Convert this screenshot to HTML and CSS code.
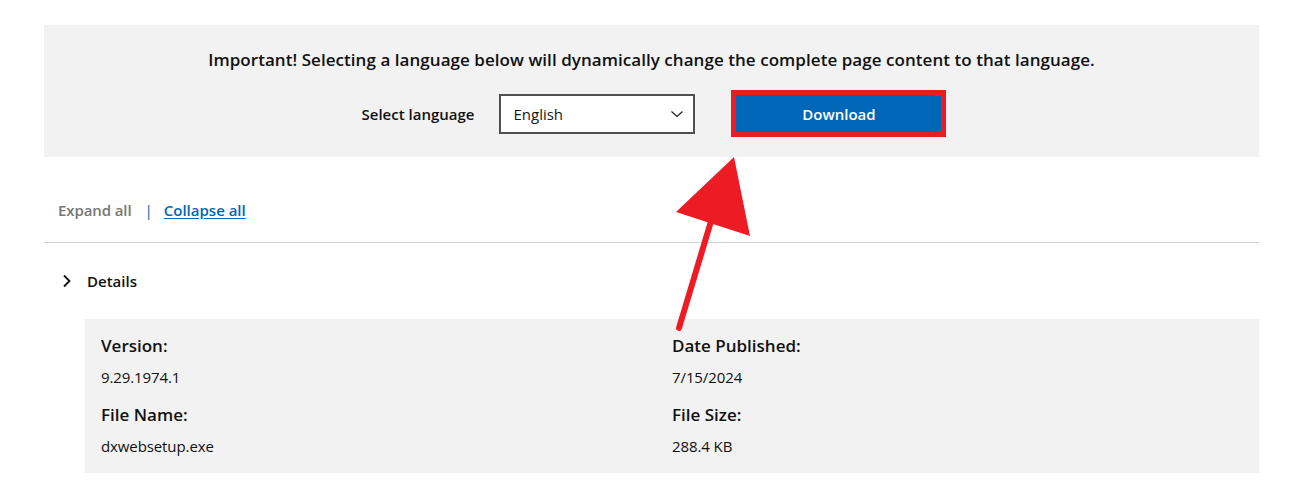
FILE: index.html
```html
<!DOCTYPE html>
<html lang="en">
<head>
<meta charset="utf-8">
<title>Download</title>
<link rel="stylesheet" href="styles.css">
</head>
<body>
<div class="page">
  <section class="banner">
    <p class="notice">Important! Selecting a language below will dynamically change the complete page content to that language.</p>
    <div class="lang-row">
      <span class="lang-label">Select language</span>
      <div class="select">
        <span>English</span>
        <svg class="caret" width="14" height="8" viewBox="0 0 14 8"><path d="M1.5 1.5 L7 6.5 L12.5 1.5" fill="none" stroke="#222" stroke-width="1.2"/></svg>
      </div>
      <div class="highlight">
        <button class="download">Download</button>
      </div>
    </div>
  </section>

  <div class="toggles">
    <span class="expand">Expand all</span>
    <span class="sep">|</span>
    <a class="collapse" href="#">Collapse all</a>
  </div>

  <div class="details-head">
    <svg class="chev" width="10" height="14" viewBox="0 0 10 14"><path d="M2 1.5 L7.5 7 L2 12.5" fill="none" stroke="#111" stroke-width="1.8"/></svg>
    <span>Details</span>
  </div>

  <div class="panel">
    <div class="cell">
      <div class="label">Version:</div>
      <div class="value">9.29.1974.1</div>
      <div class="label second">File Name:</div>
      <div class="value">dxwebsetup.exe</div>
    </div>
    <div class="cell">
      <div class="label">Date Published:</div>
      <div class="value">7/15/2024</div>
      <div class="label second">File Size:</div>
      <div class="value">288.4 KB</div>
    </div>
  </div>

  <svg class="arrow" width="1296" height="488" viewBox="0 0 1296 488">
    <line x1="679" y1="328" x2="718" y2="198" stroke="#ed1c24" stroke-width="6" stroke-linecap="round"/>
    <polygon points="734,157 676,212 750,236" fill="#ed1c24"/>
  </svg>
</div>
</body>
</html>
```
FILE: styles.css
```css
* { box-sizing: border-box; }
html, body { margin: 0; padding: 0; background: #fff; }
body {
  font-family: "Open Sans", "Noto Sans", "Liberation Sans", sans-serif;
  color: #171717;
}
.page {
  position: relative;
  width: 1296px;
  height: 488px;
  padding: 25px 37px 0 44px;
  overflow: hidden;
}
.banner {
  background: #f2f2f2;
  height: 132px;
  padding-top: 23px;
  text-align: center;
}
.notice {
  margin: 0;
  font-size: 17px;
  line-height: 24px;
  font-weight: 600;
  letter-spacing: 0.05px;
  color: #111;
}
.lang-row {
  margin-top: 18px;
  display: flex;
  justify-content: center;
  align-items: center;
  padding-left: 5px;
}
.lang-label {
  font-size: 15px;
  font-weight: 600;
  margin-right: 25px;
  color: #111;
}
.select {
  width: 196px;
  height: 40px;
  border: 2px solid #505050;
  background: #fff;
  display: flex;
  align-items: center;
  justify-content: space-between;
  padding: 0 9px 0 12px;
  font-size: 15px;
  margin-right: 36px;
}
.caret { display: block; }
.highlight {
  border: 5px solid #ed1c24;
  width: 215px;
  height: 47px;
}
.download {
  display: block;
  width: 100%;
  height: 100%;
  border: none;
  background: #0067b8;
  color: #fff;
  font-family: inherit;
  font-size: 15px;
  font-weight: 600;
  padding: 0;
}
.toggles {
  height: 86px;
  border-bottom: 1px solid #d2d2d2;
  padding: 42px 0 0 14px;
  font-size: 15px;
  line-height: 22px;
  font-weight: 600;
  display: flex;
  align-items: flex-start;
}
.expand { color: #767676; letter-spacing: -0.1px; }
.sep { color: #0067b8; margin: 0 11px 0 13px; font-weight: 400; }
.collapse { color: #0067b8; text-decoration: underline; text-underline-offset: 2px; }
.details-head {
  height: 76px;
  display: flex;
  align-items: center;
  padding-left: 18px;
  font-size: 15px;
  font-weight: 600;
  color: #111;
}
.chev { margin-right: 15px; display: block; }
.panel {
  margin-left: 41px;
  background: #f2f2f2;
  height: 154px;
  padding: 15px 16px 0;
  display: grid;
  grid-template-columns: 571px 1fr;
}
.label {
  font-size: 17px;
  line-height: 24px;
  font-weight: 600;
  color: #111;
}
.label.second { margin-top: 15px; }
.value {
  margin-top: 8px;
  font-size: 15px;
  line-height: 22px;
  letter-spacing: -0.1px;
  color: #111;
}
.arrow {
  position: absolute;
  left: 0;
  top: 0;
  pointer-events: none;
}
```
